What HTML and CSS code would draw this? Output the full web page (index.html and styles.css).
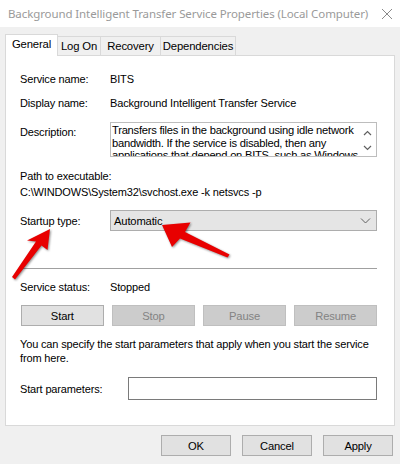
FILE: index.html
```html
<!DOCTYPE html>
<html>
<head>
<meta charset="utf-8">
<link rel="stylesheet" href="styles.css">
</head>
<body>
<div class="window">
  <div class="titlebar">
    <span class="title">Background Intelligent Transfer Service Properties (Local Computer)</span>
    <svg class="close" width="12" height="12" viewBox="0 0 12 12"><path d="M1 1 L11 11 M11 1 L1 11" stroke="#8a8a8a" stroke-width="1" fill="none"/></svg>
  </div>
  <div class="tabs">
    <div class="tab active t-general">General</div>
    <div class="tab t-logon">Log On</div>
    <div class="tab t-recovery">Recovery</div>
    <div class="tab t-deps">Dependencies</div>
  </div>
  <div class="panel">
    <div class="row r1"><span class="label">Service name:</span><span>BITS</span></div>
    <div class="row r2"><span class="label">Display name:</span><span>Background Intelligent Transfer Service</span></div>
    <div class="row desc-row">
      <span class="label desc-label">Description:</span>
      <div class="desc">
        <div class="desc-text">Transfers files in the background using idle network<br>bandwidth. If the service is disabled, then any<br>applications that depend on BITS, such as Windows</div>
        <div class="scroll">
          <svg width="9" height="6" viewBox="0 0 9 6"><path d="M1 5 L4.5 1.5 L8 5" stroke="#606060" stroke-width="1.2" fill="none"/></svg>
          <svg width="9" height="6" viewBox="0 0 9 6"><path d="M1 1 L4.5 4.5 L8 1" stroke="#606060" stroke-width="1.2" fill="none"/></svg>
        </div>
      </div>
    </div>
    <div class="path">
      <div>Path to executable:</div>
      <div>C:\WINDOWS\System32\svchost.exe -k netsvcs -p</div>
    </div>
    <div class="row startup">
      <span class="label">Startup type:</span>
      <div class="select">
        <span>Automatic</span>
        <svg width="11" height="6" viewBox="0 0 11 6"><path d="M1 0.5 L5.5 5 L10 0.5" stroke="#606060" stroke-width="1" fill="none"/></svg>
      </div>
    </div>
    <div class="separator"></div>
    <div class="row status"><span class="label">Service status:</span><span>Stopped</span></div>
    <div class="svc-buttons">
      <div class="btn">Start</div>
      <div class="btn disabled">Stop</div>
      <div class="btn disabled">Pause</div>
      <div class="btn disabled">Resume</div>
    </div>
    <p class="note">You can specify the start parameters that apply when you start the service<br>from here.</p>
    <div class="row params">
      <span class="label params-label">Start parameters:</span>
      <div class="input"></div>
    </div>
  </div>
  <div class="footer">
    <div class="btn fbtn">OK</div>
    <div class="btn fbtn">Cancel</div>
    <div class="btn fbtn">Apply</div>
  </div>
  <svg class="arrows" width="400" height="464" viewBox="0 0 400 464">
    <polygon points="50,229 47.5,250 41.5,245.5 15,279.5 12,277 36,241.5 27,240.5" />
    <polygon points="162,225 190.5,222.5 185,232 229.5,254.5 227.5,257.5 180,238.5 172,247" />
  </svg>
</div>
</body>
</html>
```
FILE: styles.css
```css
* { box-sizing: border-box; }
html, body { margin: 0; padding: 0; }
body {
  width: 400px;
  height: 464px;
  background: #f0f0f0;
  font-family: "Liberation Sans", Arial, sans-serif;
  font-size: 11px;
  letter-spacing: -0.15px;
  color: #000;
  overflow: hidden;
}
.window { position: relative; width: 400px; height: 464px; }
.titlebar {
  height: 27px;
  background: #fff;
  display: flex;
  align-items: center;
  justify-content: space-between;
  padding: 0 7px 0 8px;
}
.title {
  font-family: "Noto Sans", "Open Sans", sans-serif;
  font-size: 11.5px;
  color: #9a9a9a;
  letter-spacing: -0.1px;
}
.close { margin-top: 1px; }
.tabs {
  display: flex;
  align-items: flex-end;
  height: 21px;
  margin-top: 7px;
  padding-left: 5px;
}
.tab {
  height: 19px;
  line-height: 18px;
  text-align: center;
  border: 1px solid #d9d9d9;
  border-bottom: none;
  border-left: none;
  background: #f0f0f0;
  font-size: 11.3px;
}
.tab.active {
  height: 22px;
  margin-bottom: -1px;
  line-height: 19px;
  background: #fff;
  border-left: 1px solid #d9d9d9;
  position: relative;
  z-index: 1;
}
.t-general { width: 53px; }
.t-logon { width: 43px; }
.t-recovery { width: 60px; }
.t-deps { width: 75px; }
.panel {
  margin: 0 5px;
  height: 371px;
  background: #fff;
  border: 1px solid #d9d9d9;
  padding: 0 17px 0 14px;
}
.row { display: flex; align-items: center; }
.label { width: 90px; flex: none; }
.r1 { margin-top: 16px; height: 14px; }
.r2 { margin-top: 10px; height: 14px; }
.desc-row { margin-top: 12px; align-items: flex-start; }
.desc-label { padding-top: 4px; }
.desc {
  flex: 1;
  height: 35px;
  border: 1px solid #bdbdbd;
  display: flex;
  overflow: hidden;
}
.desc-text {
  flex: 1;
  padding: 1px 0 0 1px;
  line-height: 12.5px;
  font-size: 11.2px;
  letter-spacing: -0.25px;
  white-space: nowrap;
  overflow: hidden;
}
.scroll {
  width: 17px;
  flex: none;
  display: flex;
  flex-direction: column;
  align-items: center;
  gap: 9px;
  padding-top: 7px;
}
.path { margin-top: 11px; line-height: 16px; }
.startup { margin-top: 10px; }
.select {
  flex: 1;
  height: 21px;
  background: #e5e5e5;
  border: 1px solid #adadad;
  display: flex;
  align-items: center;
  justify-content: space-between;
  padding: 0 5px 0 3px;
  font-size: 11.2px;
}
.separator {
  margin-top: 37px;
  height: 1px;
  background: #a0a0a0;
}
.status { margin-top: 11px; height: 14px; }
.svc-buttons {
  margin-top: 11px;
  margin-left: 1px;
  display: grid;
  grid-template-columns: repeat(4, 1fr);
  gap: 8.5px;
}
.btn {
  height: 21px;
  background: #e1e1e1;
  border: 1px solid #adadad;
  display: flex;
  align-items: center;
  justify-content: center;
  font-size: 11.2px;
}
.btn.disabled {
  background: #cccccc;
  border-color: #bfbfbf;
  color: #838383;
}
.note {
  margin: 11px 0 0;
  line-height: 14px;
  white-space: nowrap;
}
.params { margin-top: 12px; }
.params-label { width: 108px; }
.input {
  flex: 1;
  height: 23px;
  border: 1px solid #7a7a7a;
  background: #fff;
}
.footer {
  display: flex;
  justify-content: flex-end;
  gap: 11px;
  margin-top: 9px;
  padding-right: 7px;
}
.fbtn { width: 70px; }
.arrows {
  position: absolute;
  top: 0;
  left: 0;
  pointer-events: none;
}
.arrows polygon {
  fill: #e80000;
  filter: drop-shadow(1px 1.5px 1px rgba(0,0,0,0.45));
}
```
